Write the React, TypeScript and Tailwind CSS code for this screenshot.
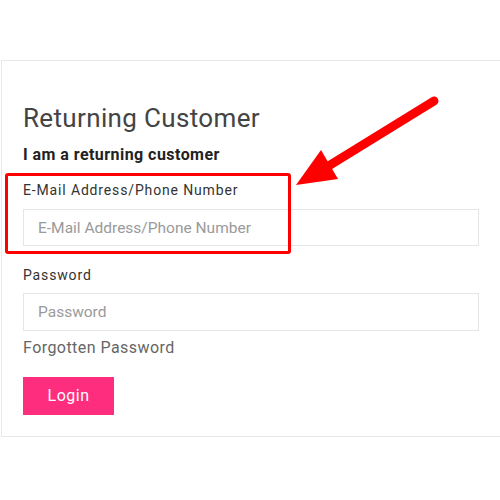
export default function App() {
  return (
    <div className="relative h-[500px] w-[500px] overflow-hidden bg-white font-['Roboto',sans-serif]">
      <div className="h-[60px]" />
      <div className="ml-[1px] w-[520px] border-y border-l border-[#e8e8e8] pb-[21px] pl-[21px] pt-[42px]">
        <h2 className="text-[26px] leading-[30px] tracking-[0.35px] text-[#444]">Returning Customer</h2>
        <p className="mt-[12px] text-[16px] font-bold leading-[20px] tracking-[0.45px] text-[#222]">
          I am a returning customer
        </p>
        <label className="mt-[15px] block text-[14px] leading-[20px] tracking-[0.85px] text-[#333]">
          E-Mail Address/Phone Number
        </label>
        <input
          className="mt-[9px] block h-[37px] w-[456px] border border-[#e6e6e6] px-[14px] text-[15.5px] text-[#555] placeholder:text-[#9a9a9a] outline-none"
          placeholder="E-Mail Address/Phone Number"
        />
        <label className="mt-[19px] block text-[14px] leading-[20px] tracking-[0.85px] text-[#333]">
          Password
        </label>
        <input
          type="password"
          className="mt-[8px] block h-[38px] w-[456px] border border-[#e6e6e6] px-[14px] text-[15.5px] text-[#555] placeholder:text-[#9a9a9a] outline-none"
          placeholder="Password"
        />
        <a className="mt-[7px] block text-[16px] leading-[20px] tracking-[0.45px] text-[#666]">
          Forgotten Password
        </a>
        <button className="mt-[19px] h-[38px] w-[91px] bg-[#ff2d7e] text-[16px] tracking-[0.5px] text-white">
          Login
        </button>
      </div>

      <div className="absolute left-[5px] top-[173px] h-[81px] w-[286px] rounded-[3px] border-[3px] border-[#ff0000]" />

      <svg className="absolute left-0 top-0" width="500" height="500" viewBox="0 0 500 500">
        <line x1="434" y1="101" x2="322" y2="170" stroke="#ff0000" strokeWidth="9" strokeLinecap="round" />
        <polygon points="296,185 321,150 338,179" fill="#ff0000" />
      </svg>
    </div>
  );
}
